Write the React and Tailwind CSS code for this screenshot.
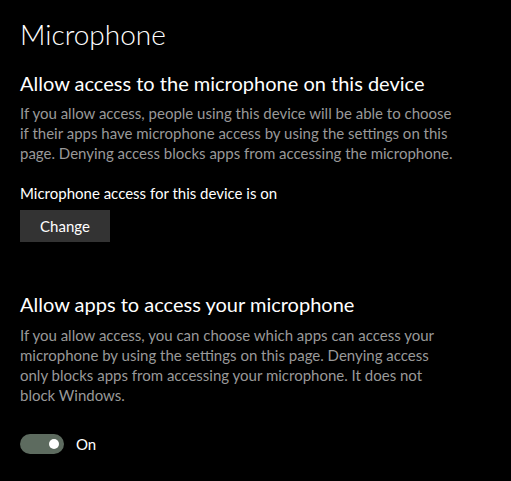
export default function App() {
  const font = { fontFamily: 'Lato, "Open Sans", sans-serif' };
  return (
    <div className="w-[511px] h-[481px] bg-black text-white overflow-hidden pl-5 pt-[14px]" style={font}>
      <h1 className="text-[28px] leading-[40px] font-light">Microphone</h1>
      <h2 className="text-[20px] leading-[28px] mt-[15px]">Allow access to the microphone on this device</h2>
      <p className="text-[15px] leading-[20px] text-[#999999] mt-[6px] whitespace-nowrap">
        If you allow access, people using this device will be able to choose<br />
        if their apps have microphone access by using the settings on this<br />
        page. Denying access blocks apps from accessing the microphone.
      </p>
      <p className="text-[15px] leading-[20px] mt-[20px]">Microphone access for this device is on</p>
      <button className="mt-[7px] w-[90px] h-[32px] bg-[#333333] text-[15px] text-white block">Change</button>
      <h2 className="text-[20px] leading-[28px] mt-[48px]">Allow apps to access your microphone</h2>
      <p className="text-[15px] leading-[20px] text-[#999999] mt-[7px] whitespace-nowrap">
        If you allow access, you can choose which apps can access your<br />
        microphone by using the settings on this page. Denying access<br />
        only blocks apps from accessing your microphone. It does not<br />
        block Windows.
      </p>
      <div className="flex items-center mt-[28px] gap-3">
        <div className="w-[44px] h-[20px] rounded-full bg-[#5d6b5f] flex items-center justify-end pr-[5px]">
          <div className="w-[10px] h-[10px] rounded-full bg-white" />
        </div>
        <span className="text-[15px]">On</span>
      </div>
    </div>
  );
}
